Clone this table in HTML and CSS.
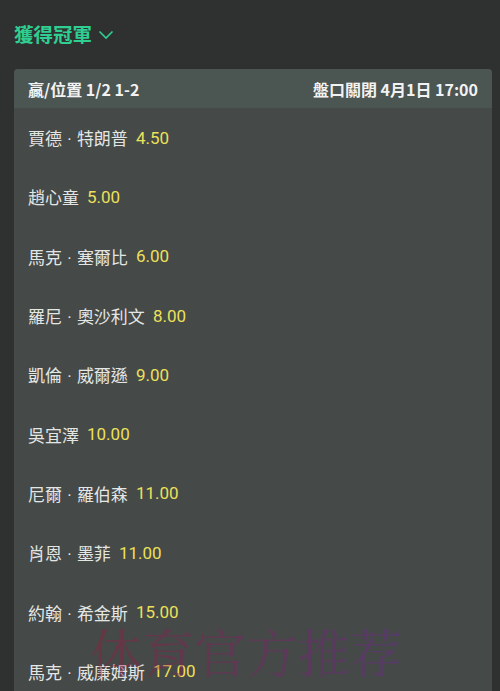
FILE: index.html
```html
<!DOCTYPE html>
<html lang="zh-Hant">
<head>
<meta charset="utf-8">
<link rel="stylesheet" href="styles.css">
</head>
<body>
<div class="page">
  <div class="title">
    <span>獲得冠軍</span>
    <svg class="chev" width="16" height="10" viewBox="0 0 16 10"><path d="M1.5 1.5 L8 8 L14.5 1.5" fill="none" stroke="#2fcf92" stroke-width="1.6"/></svg>
  </div>
  <div class="card">
    <div class="card-head">
      <span>贏/位置 1/2 1-2</span>
      <span>盤口關閉 4月1日 17:00</span>
    </div>
    <div class="row"><span class="name">賈德<span class="dot"> · </span>特朗普</span><span class="odds">4.50</span></div>
    <div class="row"><span class="name">趙心童</span><span class="odds">5.00</span></div>
    <div class="row"><span class="name">馬克<span class="dot"> · </span>塞爾比</span><span class="odds">6.00</span></div>
    <div class="row"><span class="name">羅尼<span class="dot"> · </span>奧沙利文</span><span class="odds">8.00</span></div>
    <div class="row"><span class="name">凱倫<span class="dot"> · </span>威爾遜</span><span class="odds">9.00</span></div>
    <div class="row"><span class="name">吳宜澤</span><span class="odds">10.00</span></div>
    <div class="row"><span class="name">尼爾<span class="dot"> · </span>羅伯森</span><span class="odds">11.00</span></div>
    <div class="row"><span class="name">肖恩<span class="dot"> · </span>墨菲</span><span class="odds">11.00</span></div>
    <div class="row"><span class="name">約翰<span class="dot"> · </span>希金斯</span><span class="odds">15.00</span></div>
    <div class="row"><span class="name">馬克<span class="dot"> · </span>威廉姆斯</span><span class="odds">17.00</span></div>
  </div>
  <div class="watermark">体育官方推荐</div>
</div>
</body>
</html>
```

FILE: styles.css
```css
html, body {
  margin: 0;
  padding: 0;
  background: #2f3030;
  height: 691px;
  overflow: hidden;
}
.page {
  position: relative;
  font-family: "Noto Sans CJK TC", "Noto Sans", sans-serif;
  padding: 0 8px 0 14px;
}
.title {
  height: 69px;
  display: flex;
  align-items: center;
  gap: 6px;
  padding-bottom: 2px;
  box-sizing: border-box;
  color: #2fcf92;
  font-weight: 700;
  font-size: 19.5px;
}
.chev { margin-top: 2px; }
.card {
  background: #454947;
  border-radius: 4px;
  overflow: hidden;
}
.card-head {
  height: 39px;
  background: #4b5551;
  display: flex;
  align-items: center;
  justify-content: space-between;
  padding: 0 14px 0 14px;
  color: #f2f2f2;
  font-weight: 700;
  font-size: 16px;
}
.row {
  height: 59.3px;
  display: flex;
  align-items: center;
  gap: 8px;
  padding-left: 14px;
  font-size: 17px;
  color: #e4e6e4;
}
.dot {
  font-family: "Roboto", sans-serif;
  white-space: pre;
  margin: 0 1px;
}
.odds {
  color: #ece05a;
  font-family: "Roboto", "Noto Sans", sans-serif;
  font-size: 17px;
}
.watermark {
  position: absolute;
  left: 90px;
  top: 620px;
  font-family: "Noto Serif CJK SC", "Liberation Serif", serif;
  font-size: 52px;
  line-height: 1.2;
  letter-spacing: 0;
  background: linear-gradient(90deg, rgba(150,30,60,0.4), rgba(110,40,150,0.4));
  -webkit-background-clip: text;
  background-clip: text;
  color: transparent;
}
```
